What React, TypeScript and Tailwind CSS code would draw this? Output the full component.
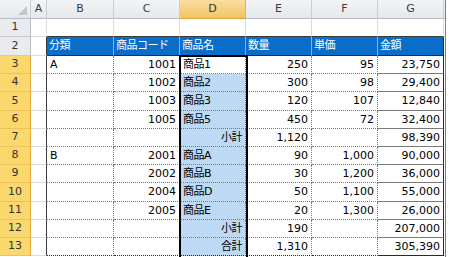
import React from "react";

const FONT = { fontFamily: '"DejaVu Sans", "Noto Sans CJK JP", sans-serif' };

type Cell = { t: string; r?: boolean };

const rows: Cell[][] = [
  [],
  [
    { t: "分類" },
    { t: "商品コード" },
    { t: "商品名" },
    { t: "数量" },
    { t: "単価" },
    { t: "金額" },
  ],
  [{ t: "A" }, { t: "1001", r: true }, { t: "商品1" }, { t: "250", r: true }, { t: "95", r: true }, { t: "23,750", r: true }],
  [{ t: "" }, { t: "1002", r: true }, { t: "商品2" }, { t: "300", r: true }, { t: "98", r: true }, { t: "29,400", r: true }],
  [{ t: "" }, { t: "1003", r: true }, { t: "商品3" }, { t: "120", r: true }, { t: "107", r: true }, { t: "12,840", r: true }],
  [{ t: "" }, { t: "1005", r: true }, { t: "商品5" }, { t: "450", r: true }, { t: "72", r: true }, { t: "32,400", r: true }],
  [{ t: "" }, { t: "" }, { t: "小計", r: true }, { t: "1,120", r: true }, { t: "" }, { t: "98,390", r: true }],
  [{ t: "B" }, { t: "2001", r: true }, { t: "商品A" }, { t: "90", r: true }, { t: "1,000", r: true }, { t: "90,000", r: true }],
  [{ t: "" }, { t: "2002", r: true }, { t: "商品B" }, { t: "30", r: true }, { t: "1,200", r: true }, { t: "36,000", r: true }],
  [{ t: "" }, { t: "2004", r: true }, { t: "商品D" }, { t: "50", r: true }, { t: "1,100", r: true }, { t: "55,000", r: true }],
  [{ t: "" }, { t: "2005", r: true }, { t: "商品E" }, { t: "20", r: true }, { t: "1,300", r: true }, { t: "26,000", r: true }],
  [{ t: "" }, { t: "" }, { t: "小計", r: true }, { t: "190", r: true }, { t: "" }, { t: "207,000", r: true }],
  [{ t: "" }, { t: "" }, { t: "合計", r: true }, { t: "1,310", r: true }, { t: "" }, { t: "305,390", r: true }],
];

const heights = [
  "h-[18px]",
  "h-[19px]",
  "h-[18px]",
  "h-[18px]",
  "h-[19px]",
  "h-[18px]",
  "h-[18px]",
  "h-[18px]",
  "h-[18px]",
  "h-[19px]",
  "h-[18px]",
  "h-[18px]",
  "h-[18px]",
];

const colW = ["w-[67px]", "w-[66px]", "w-[66px]", "w-[66px]", "w-[66px]", "w-[66px]"];

function Txt({ s }: { s: string }) {
  const parts = s.split(/([\u3000-\u9fff\uff00-\uffef]+)/).filter((p) => p.length > 0);
  return (
    <>
      {parts.map((p, i) =>
        /[\u3000-\u9fff\uff00-\uffef]/.test(p) ? (
          <span key={i} className="text-[11px] tracking-[-0.5px]">
            {p}
          </span>
        ) : (
          <span key={i}>{p}</span>
        )
      )}
    </>
  );
}

function ColHeader({ label, w, sel }: { label: string; w: string; sel?: boolean }) {
  return (
    <div
      className={`${w} h-full shrink-0 flex items-center justify-center border-r border-b text-[11px] ${
        sel
          ? "bg-gradient-to-b from-[#f9de9f] to-[#f2c462] border-r-[#e0b45a] border-b-[#e3a33a] text-[#333]"
          : "bg-gradient-to-b from-[#f3f4f6] to-[#e5e8ec] border-r-[#c9cdd3] border-b-[#b8bdc5] text-[#3c3c3c]"
      }`}
    >
      {label}
    </div>
  );
}

export default function App() {
  return (
    <div className="w-[449px] h-[257px] bg-white overflow-hidden" style={FONT}>
      <div className="relative w-[446px] h-[257px] border-r border-r-[#7d7d7d] overflow-hidden bg-white">
        {/* column header row */}
        <div className="flex h-[19px]">
          <div className="relative w-[31px] h-full shrink-0 bg-gradient-to-b from-[#f3f4f6] to-[#e5e8ec] border-r border-b border-r-[#c9cdd3] border-b-[#b8bdc5]">
            <div className="absolute right-[3px] bottom-[3px] w-0 h-0 border-l-[9px] border-l-transparent border-b-[9px] border-b-[#c3c6cb]" />
          </div>
          <ColHeader label="A" w="w-[16px]" />
          <ColHeader label="B" w="w-[67px]" />
          <ColHeader label="C" w="w-[66px]" />
          <ColHeader label="D" w="w-[66px]" sel />
          <ColHeader label="E" w="w-[66px]" />
          <ColHeader label="F" w="w-[66px]" />
          <ColHeader label="G" w="w-[66px]" />
          <div className="flex-1 h-full bg-gradient-to-b from-[#f3f4f6] to-[#e5e8ec] border-b border-b-[#b8bdc5]" />
        </div>

        {rows.map((cells, ri) => {
          const rowNo = ri + 1;
          const selRow = rowNo >= 3;
          const isHead = rowNo === 2;
          const isTop = rowNo === 1;
          const isLast = rowNo === 13;
          return (
            <div key={ri} className={`flex ${heights[ri]}`}>
              <div
                className={`w-[31px] h-full shrink-0 flex items-center justify-center border-r border-b text-[11px] text-[#333] ${
                  selRow
                    ? "bg-[#fbd86e] border-r-[#e2a93d] border-b-[#efc15a]"
                    : "bg-[#e9ebee] border-r-[#b8bdc5] border-b-[#c9cdd3]"
                }`}
              >
                {rowNo}
              </div>
              <div
                className={`w-[16px] h-full shrink-0 border-b border-b-[#dadcdd] border-r ${
                  isTop ? "border-r-[#dadcdd]" : "border-r-[#3a3a3a]"
                }`}
              />
              {colW.map((w, ci) => {
                const c = cells[ci];
                const lastCol = ci === 5;
                if (isTop) {
                  return (
                    <div
                      key={ci}
                      className={`${w} h-full shrink-0 border-r border-b border-r-[#dadcdd] border-b-[#3a3a3a]`}
                    />
                  );
                }
                if (isHead) {
                  return (
                    <div
                      key={ci}
                      className={`${w} h-full shrink-0 flex items-center pl-[2px] pt-[1px] bg-[#0a6dca] text-white text-[11px] border-b border-b-[#2a2a2a] border-r ${
                        lastCol ? "border-r-[#2a2a2a]" : "border-r-[#8fb0d4]"
                      }`}
                    >
                      <Txt s={c.t} />
                    </div>
                  );
                }
                const isD = ci === 2;
                const bg = isD && rowNo > 3 ? "bg-[#bdd9f4]" : "bg-white";
                return (
                  <div
                    key={ci}
                    className={`${w} h-full shrink-0 flex items-center pt-[1px] text-[11px] text-black ${bg} ${
                      c && c.r ? "justify-end pr-[3px]" : "justify-start pl-[3px]"
                    } border-r ${
                      lastCol ? "border-r-[#2a2a2a] border-solid" : "border-r-[#7a7a7a] border-dotted"
                    } border-b ${isLast ? "border-b-[#2a2a2a]" : "border-b-[#7a7a7a] border-dotted"}`}
                  >
                    {c ? <Txt s={c.t} /> : null}
                  </div>
                );
              })}
              <div className="flex-1 h-full border-b border-b-[#dadcdd]" />
            </div>
          );
        })}

        {/* selection outline D3:D13 */}
        <div className="absolute left-[179px] top-[55px] w-[69px] h-[210px] border-2 border-black pointer-events-none" />
      </div>
    </div>
  );
}
